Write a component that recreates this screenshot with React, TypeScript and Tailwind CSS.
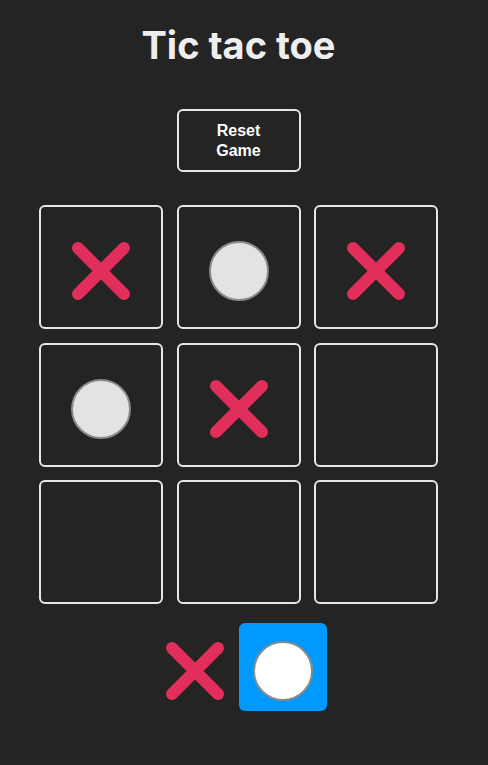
import React from "react";

const X = ({ size = 60 }: { size?: number }) => (
  <svg width={size} height={size} viewBox="0 0 60 60">
    <line x1="7" y1="7" x2="53" y2="53" stroke="#e12e5a" strokeWidth="12" strokeLinecap="round" />
    <line x1="53" y1="7" x2="7" y2="53" stroke="#e12e5a" strokeWidth="12" strokeLinecap="round" />
  </svg>
);

const O = ({ fill = "#e3e3e3" }: { fill?: string }) => (
  <div className="w-[60px] h-[60px] rounded-full border-2 border-[#8a8a8a]" style={{ background: fill }} />
);

const board: (string | null)[] = ["X", "O", "X", "O", "X", null, null, null, null];

export default function App() {
  return (
    <div className="min-h-[765px] w-full bg-[#242424] flex flex-col items-center pr-[11px]" style={{ fontFamily: "Inter, 'Liberation Sans', sans-serif" }}>
      <h1 className="mt-[20px] text-[38px] leading-[50px] font-bold text-[#eeeeee]">Tic tac toe</h1>
      <button className="mt-[39px] w-[124px] h-[63px] rounded-[6px] border-2 border-[#e6e6e6] text-white font-bold text-[16px] leading-[20px] px-[34px]" style={{ fontFamily: "'Liberation Sans', Arial, sans-serif" }}>
        Reset Game
      </button>
      <div className="mt-[33px] grid grid-cols-[124px_124px_124px] gap-x-[13.5px] gap-y-[13.5px]">
        {board.map((c, i) => (
          <div key={i} className="w-[124px] h-[124px] rounded-[6px] border-2 border-[#e6e6e6] flex items-center justify-center pt-[8px]">
            {c === "X" && <X />}
            {c === "O" && <O />}
          </div>
        ))}
      </div>
      <div className="mt-[19px] flex items-center gap-[14px] ml-[15px]">
        <div className="mt-[8px]">
          <X />
        </div>
        <div className="w-[88px] h-[88px] rounded-[6px] bg-[#0099ff] flex items-center justify-center pt-[8px]">
          <O fill="#ffffff" />
        </div>
      </div>
    </div>
  );
}
